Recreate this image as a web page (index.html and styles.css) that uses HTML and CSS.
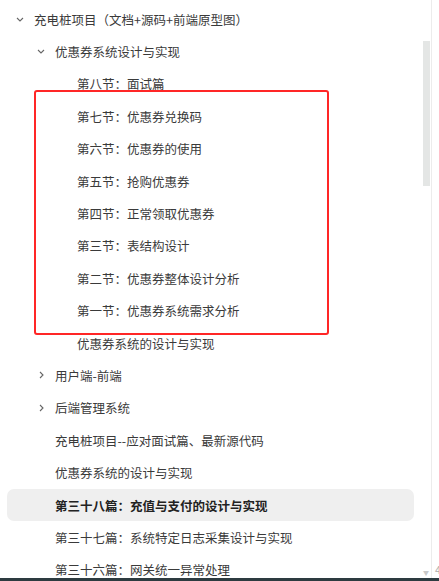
FILE: index.html
```html
<!DOCTYPE html>
<html lang="zh">
<head>
  <meta charset="UTF-8">
  <meta name="viewport" content="width=device-width, initial-scale=1.0">
  <title>目录</title>
  <link rel="stylesheet" href="styles.css">
</head>
<body>
  <div class="panel">
    <ul class="tree">
      <li class="row lv0"><span class="arrow down"><svg width="8" height="5" viewBox="0 0 8 5"><polyline points="1,1 4,4 7,1"/></svg></span>充电桩项目（文档+源码+前端原型图）</li>
      <li class="row lv1"><span class="arrow down"><svg width="8" height="5" viewBox="0 0 8 5"><polyline points="1,1 4,4 7,1"/></svg></span>优惠券系统设计与实现</li>
      <li class="row lv2">第八节：面试篇</li>
      <li class="row lv2">第七节：优惠券兑换码</li>
      <li class="row lv2">第六节：优惠券的使用</li>
      <li class="row lv2">第五节：抢购优惠券</li>
      <li class="row lv2">第四节：正常领取优惠券</li>
      <li class="row lv2">第三节：表结构设计</li>
      <li class="row lv2">第二节：优惠券整体设计分析</li>
      <li class="row lv2">第一节：优惠券系统需求分析</li>
      <li class="row lv2">优惠券系统的设计与实现</li>
      <li class="row lv1"><span class="arrow right"><svg width="5" height="8" viewBox="0 0 5 8"><polyline points="1,1 4,4 1,7"/></svg></span>用户端-前端</li>
      <li class="row lv1"><span class="arrow right"><svg width="5" height="8" viewBox="0 0 5 8"><polyline points="1,1 4,4 1,7"/></svg></span>后端管理系统</li>
      <li class="row lv1 leaf">充电桩项目--应对面试篇、最新源代码</li>
      <li class="row lv1 leaf">优惠券系统的设计与实现</li>
      <li class="row lv1 leaf active">第三十八篇：充值与支付的设计与实现</li>
      <li class="row lv1 leaf">第三十七篇：系统特定日志采集设计与实现</li>
      <li class="row lv1 leaf">第三十六篇：网关统一异常处理</li>
    </ul>
    <div class="mark"></div>
    <div class="thumb"></div>
    <span class="more">▼</span>
  </div>
  <span class="side">4</span>
  <div class="footer"></div>
</body>
</html>
```

FILE: styles.css
```css
html, body {
  margin: 0;
  padding: 0;
  background: #fff;
  height: 581px;
  overflow: hidden;
}

body {
  position: relative;
  font-family: "Noto Sans CJK SC", "Liberation Sans", sans-serif;
  font-size: 12.5px;
  color: #3a3a3a;
}

.panel {
  position: relative;
  width: 431px;
  height: 578px;
  border-right: 1px solid #ececec;
  overflow: hidden;
}

.tree {
  list-style: none;
  margin: 0;
  padding: 3px 0 0 7px;
  width: 407px;
}

.row {
  height: 32.4px;
  display: flex;
  align-items: center;
  white-space: nowrap;
  border-radius: 7px;
}

.lv0 { padding-left: 9px; }
.lv1 { padding-left: 30px; }
.lv2 { padding-left: 70px; }
.lv1.leaf { padding-left: 48px; }

.arrow {
  width: 18px;
  display: flex;
  align-items: center;
}

.arrow svg polyline {
  fill: none;
  stroke: #666;
  stroke-width: 1.1;
}

.arrow.right { padding-left: 2px; width: 16px; }

.active {
  background: #efefef;
  font-weight: bold;
  color: #222;
}

.mark {
  position: absolute;
  left: 34px;
  top: 90px;
  width: 291px;
  height: 241px;
  border: 2.5px solid #ff2626;
  border-radius: 3px;
}

.thumb {
  position: absolute;
  left: 423px;
  top: 41px;
  width: 7px;
  height: 145px;
  background: #e4e6e5;
}

.more {
  position: absolute;
  left: 423px;
  top: 568px;
  font-size: 6px;
  color: #c8c8c8;
}

.side {
  position: absolute;
  left: 435px;
  top: 561px;
  font-size: 11px;
  color: #aaa;
}

.footer {
  height: 3px;
  background: #2d3b40;
}
```
